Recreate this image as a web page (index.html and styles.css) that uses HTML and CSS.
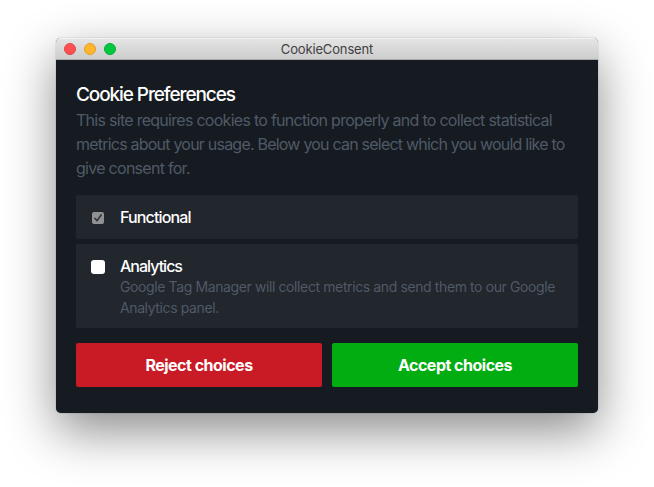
FILE: index.html
```html
<!DOCTYPE html>
<html lang="en">
<head>
<meta charset="utf-8">
<title>CookieConsent</title>
<link rel="stylesheet" href="styles.css">
</head>
<body>
<main class="window">
  <header class="titlebar">
    <div class="lights"><i class="light red"></i><i class="light yellow"></i><i class="light green"></i></div>
    <span class="window-title">CookieConsent</span>
  </header>
  <section class="content">
    <h1 class="heading">Cookie Preferences</h1>
    <p class="intro">This site requires cookies to function properly and to collect statistical<br><span class="tight">metrics about your usage. Below you can select which you would like to</span><br>give consent for.</p>
    <div class="options">
      <div class="option">
        <span class="box checked"><svg width="12" height="12" viewBox="0 0 12 12"><path d="M2.8 6.3 5 8.8 9.3 2.8" fill="none" stroke="#30343a" stroke-width="1.5" stroke-linecap="round" stroke-linejoin="round"/></svg></span>
        <div class="label">Functional</div>
      </div>
      <div class="option">
        <span class="box"></span>
        <div>
          <div class="label analytics">Analytics</div>
          <p class="detail">Google Tag Manager will collect metrics and send them to our Google<br>Analytics panel.</p>
        </div>
      </div>
    </div>
    <div class="actions">
      <button class="button reject">Reject choices</button>
      <button class="button accept">Accept choices</button>
    </div>
  </section>
</main>
</body>
</html>
```
FILE: styles.css
```css
* { box-sizing: border-box; }
body {
  margin: 0;
  padding: 38px 56px 0;
  height: 487px;
  overflow: hidden;
  background: #fff;
  font-family: Inter, "Liberation Sans", sans-serif;
}
h1, p { margin: 0; }
.window {
  width: 542px;
  height: 375px;
  border-radius: 5px;
  background: #161a21;
  box-shadow: 0 0 1px rgba(0, 0, 0, .6), 0 18px 50px rgba(0, 0, 0, .46);
}
.titlebar {
  display: grid;
  grid-template-columns: 1fr auto 1fr;
  align-items: center;
  height: 22px;
  padding: 0 8px;
  border-radius: 5px 5px 0 0;
  border-bottom: 1px solid #a9a9a9;
  background: linear-gradient(#e5e5e5, #cdcdcd);
  box-shadow: inset 0 1px #f3f3f3;
}
.lights { display: flex; gap: 8px; }
.light { width: 12px; height: 12px; border-radius: 50%; border: 1px solid; }
.red { background: #ff5052; border-color: #e2464a; }
.yellow { background: #ffb52c; border-color: #dfa023; }
.green { background: #00c840; border-color: #00ad33; }
.window-title { font-size: 13px; line-height: 20px; color: #414141; letter-spacing: -.15px; }
.content { padding: 22px 20px 26px; }
.heading { font-size: 19px; font-weight: 500; line-height: 26px; color: #fff; letter-spacing: -1.1px; }
.intro { font-size: 16px; line-height: 24px; color: #4f5a66; letter-spacing: -.72px; white-space: nowrap; }
.tight { letter-spacing: -.78px; }
.options { display: grid; gap: 5px; margin-top: 15px; }
.option {
  display: grid;
  grid-template-columns: 14px 1fr;
  column-gap: 15px;
  padding: 10px 15px;
  border-radius: 2px;
  background: #22262d;
}
.box { width: 14px; height: 14px; margin-top: 6px; border-radius: 3px; background: #fff; }
.box.checked { width: 12px; height: 12px; margin: 7px 1px 0; border-radius: 2px; background: #8f9193; }
.box svg { display: block; }
.label { font-size: 16px; font-weight: 500; line-height: 24px; color: #fff; letter-spacing: -.85px; }
.detail { font-size: 14px; line-height: 21px; color: #4f5a66; letter-spacing: -.39px; white-space: nowrap; }
.analytics { height: 22px; letter-spacing: -1px; }
.actions { display: grid; grid-template-columns: 1fr 1fr; gap: 10px; margin-top: 15px; }
.button {
  height: 44px;
  border: 0;
  border-radius: 2px;
  color: #fff;
  font: 700 16px/24px Inter, "Liberation Sans", sans-serif;
  letter-spacing: -.5px;
}
.reject { background: #c91b25; }
.accept { background: #02ad12; }
```
